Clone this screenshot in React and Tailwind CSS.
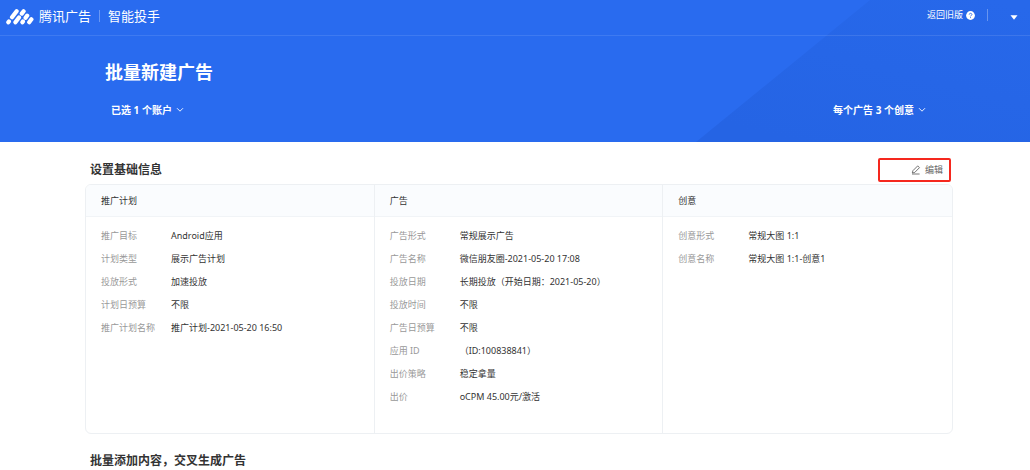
const columns = [
  {
    title: '推广计划',
    rows: [
      ['推广目标', 'Android应用'],
      ['计划类型', '展示广告计划'],
      ['投放形式', '加速投放'],
      ['计划日预算', '不限'],
      ['推广计划名称', '推广计划-2021-05-20 16:50'],
    ],
  },
  {
    title: '广告',
    rows: [
      ['广告形式', '常规展示广告'],
      ['广告名称', '微信朋友圈-2021-05-20 17:08'],
      ['投放日期', '长期投放（开始日期：2021-05-20）'],
      ['投放时间', '不限'],
      ['广告日预算', '不限'],
      ['应用 ID', '（ID:100838841）'],
      ['出价策略', '稳定拿量'],
      ['出价', 'oCPM 45.00元/激活'],
    ],
  },
  {
    title: '创意',
    rows: [
      ['创意形式', '常规大图 1:1'],
      ['创意名称', '常规大图 1:1-创意1'],
    ],
  },
]

function Logo() {
  return (
    <svg
      viewBox="0 0 28 17"
      className="h-[17px] w-7"
      fill="none"
      stroke="#fff"
      strokeWidth="4.2"
      strokeLinecap="round"
      aria-hidden="true"
    >
      <path d="M2.3 14.2l.6-.8M6 9.2l4.6-6M9.4 14.2l3.6-4.8M15.8 5.6l1.8-2.3M16.4 14.2l.5-.7M19.6 9.8l1.6-2.2M23.2 14.2l2.2-2.9" />
    </svg>
  )
}

function ChevronDown() {
  return (
    <svg
      viewBox="0 0 8 8"
      className="size-2"
      fill="none"
      stroke="currentColor"
      strokeWidth="0.9"
      aria-hidden="true"
    >
      <path d="M1 2.2l3 3 3-3" />
    </svg>
  )
}

function PencilIcon() {
  return (
    <svg
      viewBox="0 0 10 10"
      className="size-[10px]"
      fill="none"
      stroke="currentColor"
      strokeWidth="0.9"
      strokeLinejoin="round"
      aria-hidden="true"
    >
      <path d="M1.3 8l.6-2.3L6.7.9 8.5 2.6 3.8 7.4zM1 9h7.6" />
    </svg>
  )
}

function Header() {
  return (
    <header className="relative flex h-9 items-center justify-between border-b border-white/10 pr-3 pl-1.5">
      <div className="flex h-8 items-center self-start text-[13px] leading-4">
        <Logo />
        <span className="ml-[5px]">腾讯广告</span>
        <span className="mx-2 h-3 w-px bg-white/30" />
        <span>智能投手</span>
      </div>
      <div className="flex h-[30px] items-center self-start text-[9px] leading-3">
        <a href="#" className="flex items-center gap-[3px]">
          返回旧版
          <svg viewBox="0 0 9 9" className="size-[9px]" aria-hidden="true">
            <circle cx="4.5" cy="4.5" r="4.4" fill="#fff" />
            <path
              d="M3.2 3.6c0-1.7 2.7-1.7 2.7 0 0 .9-1.4.9-1.4 1.8M4.5 6.2v.9"
              fill="none"
              stroke="#2869ea"
              strokeWidth="0.9"
            />
          </svg>
        </a>
        <span className="mr-[22px] ml-3 h-3 w-px bg-white/30" />
        <button type="button" aria-label="账户菜单" className="pt-1">
          <svg viewBox="0 0 8 5" className="h-[5px] w-2" fill="#fff" aria-hidden="true">
            <path d="M.5.3h7L4 4.8z" />
          </svg>
        </button>
      </div>
    </header>
  )
}

function Banner() {
  return (
    <div className="relative bg-[#296bef] text-white">
      <svg
        viewBox="0 0 334 142"
        preserveAspectRatio="none"
        className="absolute top-0 right-0 h-full w-[334px]"
        aria-hidden="true"
      >
        <defs>
          <linearGradient id="shade" x1="0.3" y1="1" x2="0.9" y2="0">
            <stop offset="0" stopColor="#2564e4" />
            <stop offset="1" stopColor="#2768ea" />
          </linearGradient>
        </defs>
        <path d="M174 0H334V142H0z" fill="url(#shade)" />
      </svg>
      <Header />
      <div className="relative pt-6 pr-[104px] pb-6 pl-[105px]">
        <h1 className="text-lg leading-6 font-bold">批量新建广告</h1>
        <div className="mt-[18px] flex justify-between pl-1.5 text-[10px] leading-4 font-bold">
          <button type="button" className="flex items-center gap-1">
            已选 1 个账户
            <ChevronDown />
          </button>
          <button type="button" className="flex items-center gap-1">
            每个广告 3 个创意
            <ChevronDown />
          </button>
        </div>
      </div>
    </div>
  )
}

function InfoColumn({ title, rows }) {
  return (
    <section className="border-r border-[#edf0f3] last:border-r-0">
      <h3 className="border-b border-[#f1f4f7] bg-[#fafcfe] pt-2 pb-[7px] pl-[15px] leading-4 text-[#333]">
        {title}
      </h3>
      <dl className="space-y-[7px] pt-[11px] pb-7 pl-[15px]">
        {rows.map(([label, value]) => (
          <div key={label} className="flex leading-4">
            <dt className="w-[70px] shrink-0 text-[#999]">{label}</dt>
            <dd className="text-[#333]">{value}</dd>
          </div>
        ))}
      </dl>
    </section>
  )
}

export default function App() {
  return (
    <div className="bg-white font-['Noto_Sans','Noto_Sans_CJK_SC',sans-serif]">
      <Banner />
      <main className="pt-4 pr-[77px] pl-[85px] text-[9px]">
        <div className="flex items-center justify-between pr-0.5 pl-[5px]">
          <h2 className="text-xs leading-4 font-bold text-[#333]">设置基础信息</h2>
          <button
            type="button"
            className="flex h-6 w-[73px] items-center justify-end gap-1 rounded-xs border-2 border-[#f5281e] pr-1.5 text-[#666]"
          >
            <PencilIcon />
            编辑
          </button>
        </div>
        <div className="mt-0.5 grid grid-cols-3 overflow-hidden rounded-md border border-[#edf0f3]">
          {columns.map((column) => (
            <InfoColumn key={column.title} title={column.title} rows={column.rows} />
          ))}
        </div>
        <h2 className="mt-[19px] pl-[5px] text-xs leading-4 font-bold text-[#333]">
          批量添加内容，交叉生成广告
        </h2>
      </main>
    </div>
  )
}
